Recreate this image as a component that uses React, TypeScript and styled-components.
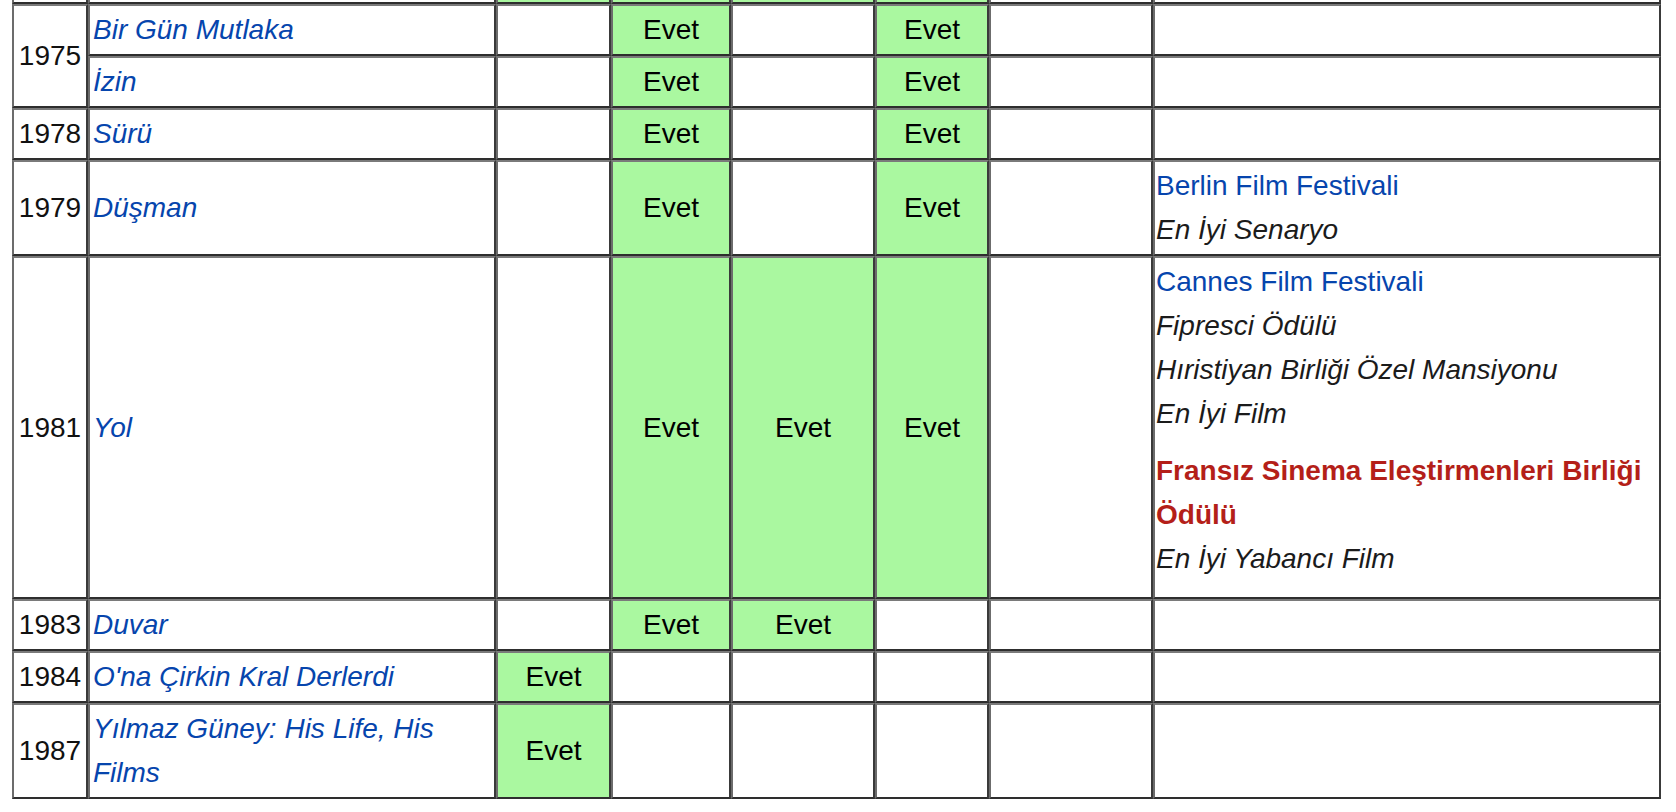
import React from "react";
import styled, { createGlobalStyle } from "styled-components";

const GlobalStyle = createGlobalStyle`
  html, body {
    margin: 0;
    padding: 0;
    background: #fff;
  }
  body {
    font-family: "Liberation Sans", Arial, Helvetica, sans-serif;
    color: #000;
    overflow: hidden;
  }
`;

const StyledTable = {
  Table: styled.table`
    border-collapse: separate;
    border-spacing: 0;
    table-layout: fixed;
    width: 1649px;
    margin: -4px 0 0 12px;
    font-size: 28px;
    line-height: 44px;
  `,
  Col: styled.col<{ $w: number }>`
    width: ${(p) => p.$w}px;
  `,
  Cell: styled.td<{ $yes?: boolean; $center?: boolean; $tight?: boolean }>`
    padding: 2px ${(p) => (p.$tight ? "2px 2px 1px" : "3px")};
    border-top: 2px solid #7a7a7a;
    border-left: 2px solid #6c6c6c;
    border-bottom: 2px solid #2e2e2e;
    border-right: 2px solid #3a3a3a;
    vertical-align: middle;
    text-align: ${(p) => (p.$center ? "center" : "left")};
    background: ${(p) => (p.$yes ? "#aaf8a0" : "#fff")};
    color: #000;
    overflow: hidden;
  `,
  Year: styled.td`
    padding: 2px 0;
    border-top: 2px solid #7a7a7a;
    border-left: 2px solid #6c6c6c;
    border-bottom: 2px solid #2e2e2e;
    border-right: 2px solid #3a3a3a;
    vertical-align: middle;
    text-align: center;
    color: #111;
  `,
  Title: styled.a`
    color: #0645ad;
    font-style: italic;
    text-decoration: none;
  `,
  Awards: styled.div<{ $trailing?: boolean }>`
    display: flex;
    flex-direction: column;
    gap: 13px;
    padding-bottom: ${(p) => (p.$trailing ? 14 : 0)}px;
  `,
  Festival: styled.div`
    display: flex;
    flex-direction: column;
  `,
  FestivalName: styled.a<{ $missing?: boolean }>`
    color: ${(p) => (p.$missing ? "#b41f19" : "#0645ad")};
    font-weight: ${(p) => (p.$missing ? 700 : 400)};
    text-decoration: none;
  `,
  Prize: styled.span`
    font-style: italic;
    color: #1b1b1b;
  `,
};

interface IAward {
  festival: string;
  missing?: boolean;
  prizes: string[];
}

interface IFilm {
  year?: string;
  rowSpan?: number;
  title: string;
  marks: boolean[];
  awards?: IAward[];
  trailing?: boolean;
}

const widths = [76, 408, 115, 120, 144, 114, 164, 508];

// bottom edge of the row above, scrolled out of view
const sliverMarks = [false, false, true, true, true, true, false, false];

const films: IFilm[] = [
  { year: "1975", rowSpan: 2, title: "Bir Gün Mutlaka", marks: [false, true, false, true, false] },
  { title: "İzin", marks: [false, true, false, true, false] },
  { year: "1978", title: "Sürü", marks: [false, true, false, true, false] },
  {
    year: "1979",
    title: "Düşman",
    marks: [false, true, false, true, false],
    awards: [{ festival: "Berlin Film Festivali", prizes: ["En İyi Senaryo"] }],
  },
  {
    year: "1981",
    title: "Yol",
    marks: [false, true, true, true, false],
    trailing: true,
    awards: [
      {
        festival: "Cannes Film Festivali",
        prizes: ["Fipresci Ödülü", "Hıristiyan Birliği Özel Mansiyonu", "En İyi Film"],
      },
      {
        festival: "Fransız Sinema Eleştirmenleri Birliği Ödülü",
        missing: true,
        prizes: ["En İyi Yabancı Film"],
      },
    ],
  },
  { year: "1983", title: "Duvar", marks: [false, true, true, false, false] },
  { year: "1984", title: "O'na Çirkin Kral Derlerdi", marks: [true, false, false, false, false] },
  { year: "1987", title: "Yılmaz Güney: His Life, His Films", marks: [true, false, false, false, false] },
];

const FilmRow = ({ film }: { film: IFilm }) => (
  <tr>
    {film.year && <StyledTable.Year rowSpan={film.rowSpan}>{film.year}</StyledTable.Year>}
    <StyledTable.Cell>
      <StyledTable.Title href="#">{film.title}</StyledTable.Title>
    </StyledTable.Cell>
    {film.marks.map((yes, i) => (
      <StyledTable.Cell key={i} $yes={yes} $center>
        {yes ? "Evet" : ""}
      </StyledTable.Cell>
    ))}
    <StyledTable.Cell $tight>
      {film.awards && (
        <StyledTable.Awards $trailing={film.trailing}>
          {film.awards.map((award) => (
            <StyledTable.Festival key={award.festival}>
              <StyledTable.FestivalName href="#" $missing={award.missing}>
                {award.festival}
              </StyledTable.FestivalName>
              {award.prizes.map((prize) => (
                <StyledTable.Prize key={prize}>{prize}</StyledTable.Prize>
              ))}
            </StyledTable.Festival>
          ))}
        </StyledTable.Awards>
      )}
    </StyledTable.Cell>
  </tr>
);

export default function App() {
  return (
    <>
      <GlobalStyle />
      <StyledTable.Table>
        <colgroup>
          {widths.map((w, i) => (
            <StyledTable.Col key={i} $w={w} />
          ))}
        </colgroup>
        <tbody>
          <tr>
            {sliverMarks.map((yes, i) => (
              <StyledTable.Cell key={i} $yes={yes} />
            ))}
          </tr>
          {films.map((film) => (
            <FilmRow key={film.title} film={film} />
          ))}
        </tbody>
      </StyledTable.Table>
    </>
  );
}
